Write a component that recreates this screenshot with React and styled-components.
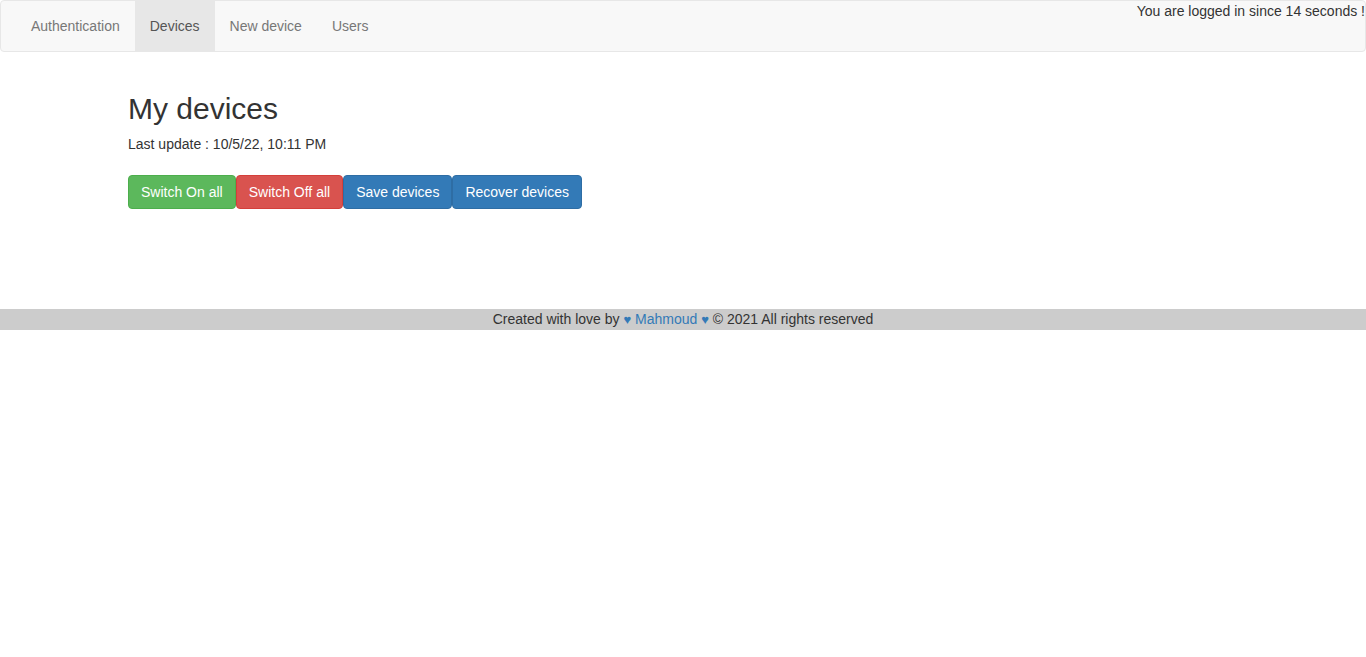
import React from 'react';
import styled, { createGlobalStyle } from 'styled-components';

const GlobalStyle = createGlobalStyle`
  * { box-sizing: border-box; }
  body {
    margin: 0;
    font-family: "Liberation Sans", Arial, Helvetica, sans-serif;
    font-size: 14px;
    line-height: 1.42857;
    color: #333;
    background: #fff;
  }
`;

const links = ['Authentication', 'Devices', 'New device', 'Users'];

const buttons = [
  { label: 'Switch On all', kind: 'success' },
  { label: 'Switch Off all', kind: 'danger' },
  { label: 'Save devices', kind: 'primary' },
  { label: 'Recover devices', kind: 'primary' },
];

const palette = {
  success: { bg: '#5cb85c', border: '#4cae4c' },
  danger: { bg: '#d9534f', border: '#d43f3a' },
  primary: { bg: '#337ab7', border: '#2e6da4' },
};

const App = () => {
  return (
    <>
      <GlobalStyle />
      <Navbar>
        <NavList>
          {links.map((l) => (
            <NavItem key={l} $active={l === 'Devices'}>
              {l}
            </NavItem>
          ))}
        </NavList>
        <Status>You are logged in since 14 seconds !</Status>
      </Navbar>
      <Main>
        <Title>My devices</Title>
        <Update>Last update : 10/5/22, 10:11 PM</Update>
        <ButtonRow>
          {buttons.map((b) => (
            <Button key={b.label} $kind={b.kind}>
              {b.label}
            </Button>
          ))}
        </ButtonRow>
      </Main>
      <Footer>
        Created with love by{' '}
        <FooterLink>
          <Heart>♥</Heart> Mahmoud <Heart>♥</Heart>
        </FooterLink>{' '}
        © 2021 All rights reserved
      </Footer>
    </>
  );
};

const Navbar = styled.nav`
  display: flex;
  justify-content: space-between;
  align-items: flex-start;
  min-height: 52px;
  padding: 0 0 0 15px;
  background: #f8f8f8;
  border: 1px solid #e7e7e7;
  border-radius: 4px;
  margin-bottom: 20px;
`;

const NavList = styled.ul`
  display: flex;
  list-style: none;
  margin: 0;
  padding: 0;
`;

const NavItem = styled.li`
  padding: 15px;
  line-height: 20px;
  color: ${(p) => (p.$active ? '#555' : '#777')};
  background: ${(p) => (p.$active ? '#e7e7e7' : 'transparent')};
  cursor: pointer;
`;

const Status = styled.div`
  flex-shrink: 0;
  line-height: 20px;
  white-space: nowrap;
  color: #333;
`;

const Main = styled.main`
  width: 1170px;
  margin: 0 auto;
  padding: 20px 30px 0;
`;

const Title = styled.h2`
  margin: 0 0 10px;
  font-size: 30px;
  font-weight: 500;
  line-height: 1.1;
`;

const Update = styled.p`
  margin: 0 0 20px;
`;

const ButtonRow = styled.div`
  display: flex;
  margin: 0 0 100px;
`;

const Button = styled.button`
  font-family: inherit;
  font-size: 14px;
  line-height: 20px;
  padding: 6px 12px;
  color: #fff;
  background: ${(p) => palette[p.$kind].bg};
  border: 1px solid ${(p) => palette[p.$kind].border};
  border-radius: 4px;
  cursor: pointer;
`;

const Footer = styled.footer`
  background: #ccc;
  text-align: center;
  line-height: 20px;
  color: #333;
`;

const FooterLink = styled.a`
  color: #337ab7;
  text-decoration: none;
`;

const Heart = styled.span`
  font-size: 13px;
`;

export default App;
